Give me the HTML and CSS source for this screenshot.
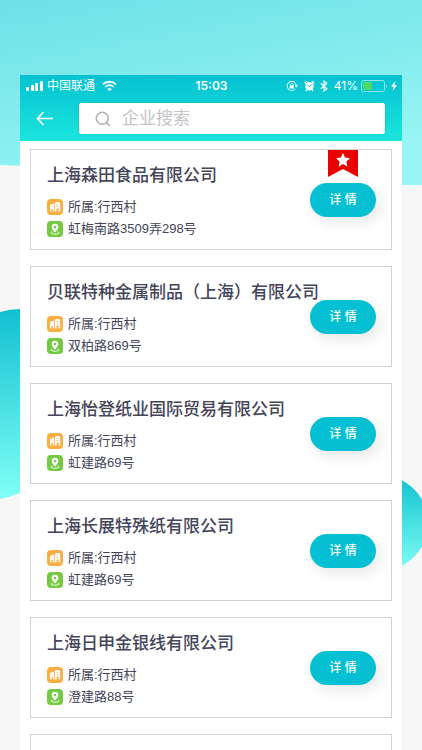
FILE: index.html
```html
<!DOCTYPE html>
<html lang="zh-CN">
<head>
  <meta charset="UTF-8">
  <meta name="viewport" content="width=device-width, initial-scale=1">
  <title>企业搜索</title>
  <link rel="stylesheet" href="styles.css">
</head>
<body>

  <!-- background shapes -->
  <svg class="backdrop" viewBox="0 0 422 750" preserveAspectRatio="none" aria-hidden="true">
    <defs>
      <linearGradient id="wave" x1="0" y1="0" x2="0.4" y2="1">
        <stop offset="0" stop-color="#6ce1e7"/>
        <stop offset="1" stop-color="#98f5f3"/>
      </linearGradient>
      <linearGradient id="ball" x1="0" y1="0" x2="0" y2="1">
        <stop offset="0" stop-color="#12c0d0"/>
        <stop offset="1" stop-color="#80fff6"/>
      </linearGradient>
    </defs>
    <path d="M0 0H422V185H402C260 184 120 169 0 165Z" fill="url(#wave)"/>
    <path d="M0 312Q10 309 20 309C130 309 130 455 20 493Q10 497 0 499Z" fill="url(#ball)"/>
    <circle cx="380" cy="523" r="48" fill="url(#ball)"/>
  </svg>

  <!-- shared icons -->
  <svg class="sprite" aria-hidden="true">
    <symbol id="icon-company" viewBox="0 0 16 16">
      <rect width="16" height="16" rx="4" fill="#f9ae42"/>
      <path d="M3 12.500V6L7 4.500V12.500H6V10H4.500V12.500ZM7.800 12.500V4L9 3H12L13.200 4V12.500H11.600V9.500H9.600V12.500Z" fill="#fff"/>
      <path d="M4.500 7.500H5.500M9.500 5.500H11.500M9.500 7.500H11.500" stroke="#f9ae42" stroke-width="0.700"/>
    </symbol>
    <symbol id="icon-place" viewBox="0 0 16 16">
      <rect width="16" height="16" rx="4" fill="#74c943"/>
      <path d="M8 2.800A3.300 3.300 0 0 0 4.700 6.100C4.700 8.400 8 11.500 8 11.500S11.300 8.400 11.300 6.100A3.300 3.300 0 0 0 8 2.800ZM8 4.800A1.300 1.300 0 1 1 8 7.400A1.300 1.300 0 0 1 8 4.800Z" fill="#fff"/>
      <path d="M5.500 10.800C3 11.400 3.500 13.200 8 13.200S13 11.400 10.500 10.800" fill="none" stroke="#fff" stroke-width="0.900"/>
    </symbol>
  </svg>

  <div class="phone">
    <header class="header">
      <div class="status">
        <div class="status-left">
          <svg width="18" height="12" viewBox="0 0 18 12" fill="#fff" aria-hidden="true">
            <rect x="0" y="7" width="3" height="4" rx="1"/>
            <rect x="5" y="5" width="3" height="6" rx="1"/>
            <rect x="9" y="3" width="3" height="8" rx="1"/>
            <rect x="14" y="1" width="3" height="10" rx="1"/>
          </svg>
          <span>中国联通</span>
          <svg class="wifi" width="15" height="12" viewBox="0 0 15 12" fill="none" stroke="#fff" stroke-width="1.800" aria-hidden="true">
            <path d="M1 4.500C4.500 0.800 10.500 0.800 14 4.500"/>
            <path d="M3.400 7C5.700 4.600 9.300 4.600 11.600 7"/>
            <path d="M7.500 11.300L5.200 8.900C6.500 7.700 8.500 7.700 9.800 8.900Z" fill="#fff" stroke="none"/>
          </svg>
        </div>
        <span class="time">15:03</span>
        <div class="status-right">
          <svg width="12" height="12" viewBox="0 0 12 12" fill="none" stroke="#fff" aria-hidden="true">
            <path d="M9.200 9A4.600 4.600 0 1 1 10.300 5.500"/>
            <path d="M8.800 5.300H12L10.400 7.500Z" fill="#fff" stroke="none"/>
            <rect x="3.700" y="5.500" width="4" height="3" fill="#fff" stroke="none"/>
            <path d="M4.500 5.700V4.500A1.200 1.200 0 0 1 6.900 4.500V5.700" stroke-width="0.800"/>
          </svg>
          <svg class="alarm" width="11" height="12" viewBox="0 0 11 12" aria-hidden="true">
            <circle cx="5.500" cy="6.300" r="4.200" fill="#fff"/>
            <path d="M0.800 3.200L3 1.200M10.200 3.200L8 1.200M2.800 9.800L1.800 11M8.200 9.800L9.200 11" stroke="#fff" stroke-width="1.400"/>
            <path d="M3.500 5L5.600 6.600L7.600 4.300" fill="none" stroke="#0bc5d3" stroke-width="0.900"/>
          </svg>
          <svg class="bluetooth" width="8" height="12" viewBox="0 0 8 12" fill="none" stroke="#fff" stroke-width="1.200" aria-hidden="true">
            <path d="M0.800 3.300L6.800 8.700L4 11V1L6.800 3.300L0.800 8.700"/>
          </svg>
          <span class="percent">41%</span>
          <svg width="27" height="12" viewBox="0 0 27 12" aria-hidden="true">
            <rect x="0.500" y="0.500" width="23" height="11" rx="2" fill="none" stroke="#8be6eb"/>
            <rect x="2" y="2" width="9" height="8" fill="#4cd964"/>
            <path d="M25 4.200C26.400 4.800 26.400 7.200 25 7.800Z" fill="#8be6eb"/>
          </svg>
          <svg class="bolt" width="6" height="10" viewBox="0 0 6 10" fill="#fff" aria-hidden="true">
            <path d="M4.300 0L0 5.500H2.500L1.500 10L6 4.200H3.500Z"/>
          </svg>
        </div>
      </div>

      <div class="search-row">
        <button class="back" type="button" aria-label="返回">
          <svg width="18" height="16" viewBox="0 0 18 16" fill="none" stroke="#fff" stroke-width="1.700" aria-hidden="true">
            <path d="M18 7.500H2.500M8.500 1L2.500 7.500L8.500 14"/>
          </svg>
        </button>
        <label class="search">
          <svg width="16" height="16" viewBox="0 0 16 16" fill="none" stroke="#b0b0b4" stroke-width="1.500" aria-hidden="true">
            <circle cx="7.300" cy="7.300" r="6"/>
            <path d="M11.600 11.600L15 15"/>
          </svg>
          <input type="search" placeholder="企业搜索" aria-label="企业搜索">
        </label>
      </div>
    </header>

    <main class="list">
      <article class="card">
        <svg class="ribbon" width="30" height="27" viewBox="0 0 30 27" aria-hidden="true">
          <path d="M0 0H30V27L15 19L0 27Z" fill="#e60000"/>
          <path d="M15 3L17.100 7.600L22 8.200L18.400 11.600L19.300 16.500L15 14.100L10.700 16.500L11.600 11.600L8 8.200L12.900 7.600Z" fill="#fff"/>
        </svg>
        <h2>上海森田食品有限公司</h2>
        <ul>
          <li><svg class="icon"><use href="#icon-company"/></svg>所属:行西村</li>
          <li><svg class="icon"><use href="#icon-place"/></svg>虹梅南路3509弄298号</li>
        </ul>
        <button class="detail" type="button">详 情</button>
      </article>

      <article class="card">
        <h2>贝联特种金属制品（上海）有限公司</h2>
        <ul>
          <li><svg class="icon"><use href="#icon-company"/></svg>所属:行西村</li>
          <li><svg class="icon"><use href="#icon-place"/></svg>双柏路869号</li>
        </ul>
        <button class="detail" type="button">详 情</button>
      </article>

      <article class="card">
        <h2>上海怡登纸业国际贸易有限公司</h2>
        <ul>
          <li><svg class="icon"><use href="#icon-company"/></svg>所属:行西村</li>
          <li><svg class="icon"><use href="#icon-place"/></svg>虹建路69号</li>
        </ul>
        <button class="detail" type="button">详 情</button>
      </article>

      <article class="card">
        <h2>上海长展特殊纸有限公司</h2>
        <ul>
          <li><svg class="icon"><use href="#icon-company"/></svg>所属:行西村</li>
          <li><svg class="icon"><use href="#icon-place"/></svg>虹建路69号</li>
        </ul>
        <button class="detail" type="button">详 情</button>
      </article>

      <article class="card">
        <h2>上海日申金银线有限公司</h2>
        <ul>
          <li><svg class="icon"><use href="#icon-company"/></svg>所属:行西村</li>
          <li><svg class="icon"><use href="#icon-place"/></svg>澄建路88号</li>
        </ul>
        <button class="detail" type="button">详 情</button>
      </article>

      <article class="card"></article>
    </main>
  </div>

</body>
</html>
```
FILE: styles.css
```css
* {
  box-sizing: border-box;
}

body {
  margin: 0;
  padding: 75px 20px 0;
  height: 100vh;
  overflow: hidden;
  background-color: #f7f7f7;
  color: #45455a;
  font-family: "Liberation Sans", "Noto Sans CJK SC", sans-serif;
}

.backdrop {
  position: absolute;
  top: 0;
  left: 0;
  width: 100%;
  height: 100%;
  z-index: -1;
}

.sprite {
  display: none;
}

.phone {
  height: 100%;
  overflow: hidden;
  background-color: #fff;
}

.header {
  background: linear-gradient(#05c1d1, #1be5dc);
  color: #fff;
  padding-bottom: 7px;
}

.status {
  display: grid;
  grid-template-columns: 1fr auto 1fr;
  align-items: center;
  height: 22px;
  padding: 0 5px 0 6px;
  font-size: 12px;
  line-height: 20px;
}

.status-left,
.status-right {
  display: flex;
  align-items: center;
}

.status-left {
  gap: 3px;
}

.status-right {
  justify-content: flex-end;
}

.wifi {
  margin-left: 4px;
}

.time {
  font-family: Inter, sans-serif;
  font-weight: 600;
}

.alarm {
  margin-left: 6px;
}

.bluetooth {
  margin-left: 5px;
}

.percent {
  margin: 0 3px 0 6px;
  font-family: Inter, sans-serif;
}

.bolt {
  margin-left: 3px;
}

.search-row {
  display: flex;
  align-items: center;
  padding: 6px 17px 0 15px;
}

.back {
  display: flex;
  padding: 0;
  margin-right: 26px;
  border: none;
  background: none;
  cursor: pointer;
}

.search {
  display: flex;
  flex: 1;
  align-items: center;
  gap: 11px;
  height: 31px;
  padding-left: 16px;
  background-color: #fff;
  border-radius: 2px;
  box-shadow: 0 0 2px rgba(0, 100, 110, 0.3);
}

.search input {
  flex: 1;
  min-width: 0;
  padding: 0;
  border: none;
  outline: none;
  background: none;
  font-family: inherit;
  font-size: 17px;
}

.search input::placeholder {
  color: #c3c3c8;
}

.list {
  display: flex;
  flex-direction: column;
  gap: 16px;
  padding: 8px 10px;
}

.card {
  position: relative;
  display: grid;
  flex-shrink: 0;
  grid-template-columns: 1fr 66px;
  align-items: center;
  min-height: 101px;
  padding: 10px 15px 9px 16px;
  border: 1px solid #d2d0d2;
}

.card h2 {
  grid-area: 1 / 1 / 2 / 3;
  margin: 0 0 4px;
  font-size: 17px;
  font-weight: 500;
  line-height: 32px;
  white-space: nowrap;
}

.card ul {
  grid-area: 2 / 1;
  margin: 0;
  padding: 0;
  list-style: none;
}

.card li {
  display: flex;
  align-items: center;
  gap: 5px;
  height: 22px;
  font-size: 13px;
  line-height: 20px;
}

.icon {
  width: 16px;
  height: 16px;
}

.detail {
  grid-area: 1 / 2 / 3 / 3;
  height: 34px;
  padding: 0;
  border: none;
  border-radius: 17px;
  background-color: #04c0d2;
  box-shadow: 4px 6px 14px rgba(0, 0, 0, 0.09);
  color: #fff;
  font-family: inherit;
  font-size: 12px;
  font-weight: 500;
  line-height: 32px;
  cursor: pointer;
}

.ribbon {
  position: absolute;
  top: 0;
  right: 33px;
}
```
